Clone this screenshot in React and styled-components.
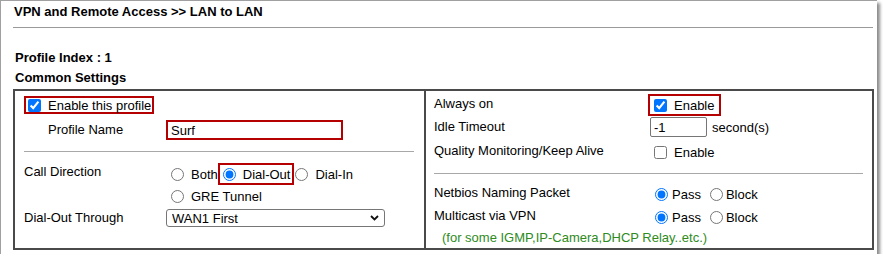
import React from 'react';
import styled, { createGlobalStyle } from 'styled-components';

const GlobalStyle = createGlobalStyle`
  body {
    margin: 0;
    background: #fff;
    font-family: "Liberation Sans", Arial, sans-serif;
    font-size: 13px;
    color: #000;
  }
`;

const Frame = styled.div`
  width: 877px;
  height: 254px;
  box-sizing: border-box;
  border-top: 1px solid #a0a0a0;
  border-left: 1px solid #a0a0a0;
  box-shadow: 3px 3px 3px #8c8c8c;
  background: #fff;
`;

const Header = styled.div`
  margin: 0 4px 0 12px;
  padding: 3px 0 7px 1px;
  line-height: 16px;
  font-weight: bold;
  border-bottom: 1px solid #9a9a9a;
`;

const Heading = styled.div`
  margin-left: 14px;
  margin-top: ${(p) => p.$top || 0}px;
  line-height: 20px;
  font-weight: bold;
`;

const Table = styled.div`
  margin: 1px 0 0 12px;
  width: 861px;
  height: 161px;
  box-sizing: border-box;
  border: 2px solid #4a4a4a;
  display: grid;
  grid-template-columns: 411px 1fr;
`;

const LeftCell = styled.div`
  border-right: 2px solid #4a4a4a;
  padding: 5px 0 0 9px;
  display: flex;
  flex-direction: column;
`;

const RightCell = styled.div`
  padding: 3px 0 0 8px;
  display: flex;
  flex-direction: column;
`;

const RedBox = styled.label`
  align-self: flex-start;
  display: inline-flex;
  align-items: center;
  box-sizing: border-box;
  height: ${(p) => p.$h || 18}px;
  border: 2px solid #b40000;
  padding-right: ${(p) => p.$pr || 1}px;
`;

const Row = styled.div`
  display: flex;
  align-items: ${(p) => (p.$top ? 'flex-start' : 'center')};
  height: ${(p) => p.$h || 20}px;
  margin-top: ${(p) => p.$mt || 0}px;
`;

const Label = styled.div`
  box-sizing: border-box;
  flex: none;
  width: ${(p) => p.$w}px;
  padding-left: ${(p) => p.$indent || 0}px;
  padding-top: ${(p) => p.$pt || 0}px;
  padding-bottom: ${(p) => p.$lift || 0}px;
  line-height: 16px;
`;

const Check = styled.input.attrs({ type: 'checkbox' })`
  width: 13px;
  height: 13px;
  margin: 0 7px 0 ${(p) => p.$ml || 0}px;
  accent-color: #0075ff;
`;

const Radio = styled.input.attrs({ type: 'radio' })`
  width: 13px;
  height: 13px;
  margin: 0 ${(p) => (p.$mr === undefined ? 7 : p.$mr)}px 0 ${(p) => p.$ml || 0}px;
  accent-color: #0075ff;
`;

const Option = styled.label`
  display: inline-flex;
  align-items: center;
  height: 100%;
`;

const NameInput = styled.input`
  box-sizing: border-box;
  width: 177px;
  height: 20px;
  border: 2px solid #b40000;
  padding: 0 3px;
  font: 13px "Liberation Sans", Arial, sans-serif;
  color: #000;
  outline: none;
`;

const TextInput = styled.input`
  box-sizing: border-box;
  width: 57px;
  height: 20px;
  margin-left: 2px;
  border: 1px solid #767676;
  border-radius: 2px;
  padding: 0 3px;
  font: 13px "Liberation Sans", Arial, sans-serif;
  color: #000;
  outline: none;
`;

const Unit = styled.span`
  margin-left: 5px;
`;

const Rule = styled.div`
  margin: ${(p) => p.$mt}px ${(p) => p.$mr}px 0 0;
  border-top: 1px solid #a8a8a8;
`;

const Choices = styled.div`
  display: flex;
  flex-direction: column;
`;

const ChoiceLine = styled.div`
  display: flex;
  align-items: center;
  height: 22px;
`;

const SelectWrap = styled.div`
  position: relative;
  width: 219px;
  height: 18px;
`;

const Select = styled.select`
  appearance: none;
  box-sizing: border-box;
  width: 100%;
  height: 18px;
  border: 1px solid #767676;
  border-radius: 3px;
  padding: 0 0 0 5px;
  background: #fff;
  font: 13px "Liberation Sans", Arial, sans-serif;
  color: #000;
  outline: none;
`;

const Chevron = styled.svg`
  position: absolute;
  right: 6px;
  top: 6px;
  pointer-events: none;
`;

const Note = styled.div`
  margin-top: 2px;
  padding-left: 8px;
  line-height: 18px;
  color: #2e8b22;
`;

export default function App() {
  return (
    <>
      <GlobalStyle />
      <Frame>
        <Header>VPN and Remote Access &gt;&gt; LAN to LAN</Header>
        <Heading $top={20}>Profile Index : 1</Heading>
        <Heading>Common Settings</Heading>
        <Table>
          <LeftCell>
            <RedBox>
              <Check $ml={2} defaultChecked />
              Enable this profile
            </RedBox>
            <Row $mt={6}>
              <Label $w={142} $indent={24}>Profile Name</Label>
              <NameInput defaultValue="Surf" />
            </Row>
            <Rule $mt={11} $mr={10} />
            <Row $mt={11} $h={44} $top>
              <Label $w={142} $pt={1}>Call Direction</Label>
              <Choices>
                <ChoiceLine>
                  <Option>
                    <Radio name="dir" $ml={5} />
                    Both
                  </Option>
                  <RedBox $h={22} $pr={2}>
                    <Radio name="dir" $ml={3} defaultChecked />
                    Dial-Out
                  </RedBox>
                  <Option>
                    <Radio name="dir" $ml={1} />
                    Dial-In
                  </Option>
                </ChoiceLine>
                <ChoiceLine>
                  <Option>
                    <Radio name="dir" $ml={5} />
                    GRE Tunnel
                  </Option>
                </ChoiceLine>
              </Choices>
            </Row>
            <Row $mt={2} $h={18}>
              <Label $w={142}>Dial-Out Through</Label>
              <SelectWrap>
                <Select defaultValue="wan1">
                  <option value="wan1">WAN1 First</option>
                </Select>
                <Chevron width="9" height="6" viewBox="0 0 9 6">
                  <polyline points="1,1 4.5,4.5 8,1" fill="none" stroke="#111" strokeWidth="1.8" />
                </Chevron>
              </SelectWrap>
            </Row>
          </LeftCell>

          <RightCell>
            <Row $h={22}>
              <Label $w={214} $lift={3}>Always on</Label>
              <RedBox $h={22} $pr={5}>
                <Check $ml={4} defaultChecked />
                Enable
              </RedBox>
            </Row>
            <Row $mt={1}>
              <Label $w={214}>Idle Timeout</Label>
              <TextInput defaultValue="-1" />
              <Unit>second(s)</Unit>
            </Row>
            <Row $mt={4} $h={22}>
              <Label $w={214} $lift={3}>Quality Monitoring/Keep Alive</Label>
              <Option>
                <Check $ml={6} />
                Enable
              </Option>
            </Row>
            <Rule $mt={10} $mr={9} />
            <Row $mt={10}>
              <Label $w={214} $lift={2}>Netbios Naming Packet</Label>
              <Option>
                <Radio name="nb" $ml={7} $mr={4} defaultChecked />
                Pass
              </Option>
              <Option>
                <Radio name="nb" $ml={9} $mr={3} />
                Block
              </Option>
            </Row>
            <Row $mt={3}>
              <Label $w={214} $lift={2}>Multicast via VPN</Label>
              <Option>
                <Radio name="mc" $ml={7} $mr={4} defaultChecked />
                Pass
              </Option>
              <Option>
                <Radio name="mc" $ml={9} $mr={3} />
                Block
              </Option>
            </Row>
            <Note>(for some IGMP,IP-Camera,DHCP Relay..etc.)</Note>
          </RightCell>
        </Table>
      </Frame>
    </>
  );
}
